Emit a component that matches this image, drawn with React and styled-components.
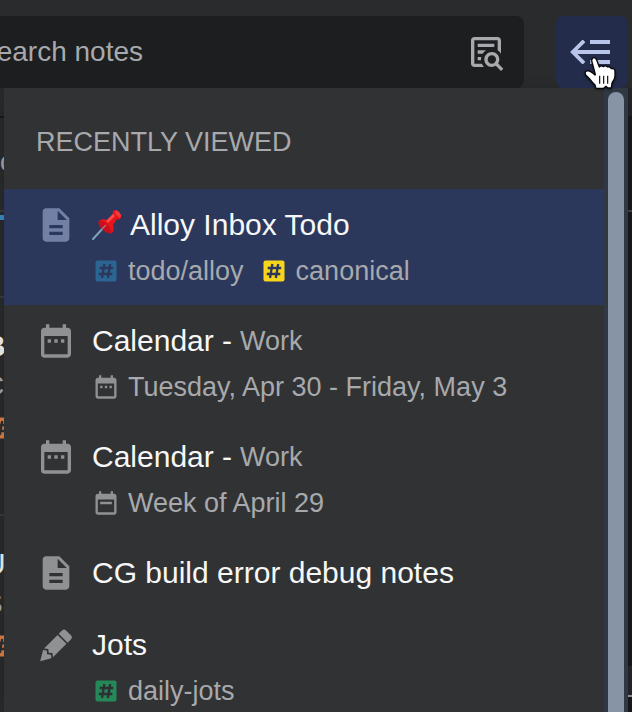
import styled, { createGlobalStyle, css } from 'styled-components';
import { MdDateRange, MdDescription } from 'react-icons/md';

const GlobalStyle = createGlobalStyle`
  * {
    box-sizing: border-box;
  }
  body {
    margin: 0;
    overflow: hidden;
    background: #2a2b2d;
    font-family: "Liberation Sans", Arial, sans-serif;
  }
`;

const Shell = styled.div`
  height: 100vh;
  margin-left: -24px;
  display: flex;
  flex-direction: column;
`;

const TopBar = styled.header`
  position: relative;
  z-index: 2;
  display: flex;
  gap: 32px;
  padding: 16px 4px 0 0;
`;

const SearchBox = styled.label`
  flex: 1;
  height: 72px;
  display: flex;
  align-items: center;
  padding-right: 18px;
  background: #1d1e20;
  border-radius: 8px;
`;

const SearchInput = styled.input`
  flex: 1;
  min-width: 0;
  height: 40px;
  padding: 0 2px;
  border: none;
  outline: none;
  background: transparent;
  font-family: inherit;
  font-size: 28px;
  color: #f4f4f4;

  &::placeholder {
    color: #a7a9ac;
    opacity: 1;
  }
`;

const CollapseButton = styled.button`
  position: relative;
  width: 72px;
  height: 72px;
  display: flex;
  align-items: center;
  justify-content: center;
  padding: 0;
  border: none;
  border-radius: 8px;
  background: #232c4b;
  color: #b9c5ea;
  cursor: pointer;
`;

const Pointer = styled.svg`
  position: absolute;
  left: 24px;
  top: 34px;
  width: 40px;
  height: 44px;
  filter: drop-shadow(0 1px 1px rgba(0, 0, 0, 0.5));
`;

const Body = styled.main`
  position: relative;
  flex: 1;
  min-height: 0;
  display: flex;
`;

const NoteList = styled.section`
  width: 320px;
  overflow: hidden;
  background: #2a2b2d;
`;

const ListBar = styled.div`
  height: ${({ $tall }) => ($tall ? '94px' : '30px')};
  padding: ${({ $tall }) => ($tall ? '26px 8px 0 24px' : '0')};
  border-bottom: 2px solid ${({ $tall }) => ($tall ? '#3b3c3e' : '#18191a')};
  font-size: 27px;
  line-height: 36px;
  color: #a7a9ac;
`;

const ActiveTab = styled.div`
  width: 28px;
  height: 8px;
  margin: 0 0 76px;
  border-bottom: 5px solid #3b8ac4;
`;

const NoteCard = styled.article`
  height: 218px;
  padding: 28px 8px 0;
  border-top: 2px solid #3b3c3e;
`;

const CardTitle = styled.div`
  font-size: 30px;
  line-height: 40px;
  font-weight: ${({ $bold }) => ($bold ? 700 : 400)};
  color: #f4f4f4;
`;

const CardText = styled.div`
  margin-bottom: 8px;
  font-size: 28px;
  line-height: 40px;
  color: #a7a9ac;
`;

const Editor = styled.section`
  flex: 1;
  display: flex;
  flex-direction: column;
  background: #191a1b;
`;

const EditorBar = styled.div`
  height: ${({ $height }) => $height}px;
  flex: none;
  background: ${({ $tone }) => $tone || 'transparent'};
  border-bottom: 2px solid ${({ $line }) => $line};
`;

const EditorText = styled.div`
  flex: 1;
`;

const Menu = styled.section`
  position: absolute;
  top: 0;
  bottom: 0;
  left: 28px;
  right: 4px;
  display: flex;
  overflow: hidden;
  background: #313234;
  box-shadow: 0 4px 16px rgba(0, 0, 0, 0.2);
`;

const MenuContent = styled.div`
  flex: 1;
  min-width: 0;
`;

const MenuHeading = styled.h2`
  margin: 0;
  padding: 36px 32px 29px;
  font-size: 27px;
  font-weight: 400;
  line-height: 36px;
  color: #a7a9ac;
`;

const Items = styled.ul`
  margin: 0;
  padding: 0;
  list-style: none;
`;

const Item = styled.button`
  width: 100%;
  display: flex;
  align-items: flex-start;
  gap: 16px;
  padding: 16px 32px;
  border: none;
  background: transparent;
  color: #909193;
  font-family: inherit;
  text-align: left;
  cursor: pointer;

  ${({ $selected }) =>
    $selected &&
    css`
      background: #2b385c;
      color: #7280a6;
    `}
`;

const ItemText = styled.span`
  flex: 1;
  display: flex;
  flex-direction: column;
  gap: 8px;
`;

const Title = styled.span`
  display: flex;
  align-items: center;
  gap: 8px;
  font-size: 30px;
  line-height: 40px;
  white-space: nowrap;
  color: #f7f7f7;
`;

const Account = styled.span`
  font-size: 27px;
  color: #a7a9ac;
`;

const Details = styled.span`
  display: flex;
  gap: 16px;
`;

const Detail = styled.span`
  display: flex;
  align-items: center;
  gap: 8px;
  font-size: 27px;
  line-height: 36px;
  white-space: nowrap;
  color: #a7a9ac;
`;

const DetailIcon = styled.span`
  display: flex;
  color: #909193;
`;

const Track = styled.div`
  width: 24px;
  flex: none;
  padding: 4px 4px 0;
  background: #303843;
`;

const Thumb = styled.div`
  height: 100%;
  border-radius: 8px 8px 0 0;
  background: #8694a5;
`;

const HashIcon = ({ color, ink = '#2d2f33' }) => (
  <svg width="28" height="28" viewBox="0 0 24 24" fill="none">
    <rect x="3" y="3" width="18" height="18" rx="1.8" fill={color} />
    <path
      d="M10.6 6 8.6 18M15.6 6 13.6 18M6.6 9.4H18.2M5.8 14.6H17.4"
      stroke={ink}
      strokeWidth="2"
    />
  </svg>
);

const PencilIcon = () => (
  <svg width="40" height="40" viewBox="0 0 24 24" fill="currentColor">
    <path d="M16.84 2.73c-.39 0-.77.15-1.07.44l-2.12 2.12 5.3 5.31 2.12-2.1c.6-.61.6-1.56 0-2.14L17.9 3.17c-.3-.29-.68-.44-1.06-.44M12.94 6l-8.1 8.11 2.56.28.18 2.29 2.28.17.29 2.56 8.1-8.11M4.25 15.04 2.5 21.73l6.7-1.79-.24-2.16-2.31-.17-.18-2.32" />
  </svg>
);

const WeekIcon = () => (
  <svg width="28" height="28" viewBox="0 0 24 24" fill="currentColor">
    <path d="M19 4h-1V2h-2v2H8V2H6v2H5c-1.1 0-2 .9-2 2v14c0 1.1.9 2 2 2h14c1.1 0 2-.9 2-2V6c0-1.1-.9-2-2-2zm0 16H5V9h14v11zM7 11h10v2H7z" />
  </svg>
);

const NoteSearchIcon = () => (
  <svg width="40" height="40" viewBox="0 0 24 24" fill="#a7a9ac">
    <path d="M15.5 12c2.5 0 4.5 2 4.5 4.5 0 .88-.25 1.71-.69 2.4L22.39 22 21 23.39l-3.12-3.07c-.69.43-1.51.68-2.38.68-2.5 0-4.5-2-4.5-4.5s2-4.5 4.5-4.5m0 2a2.5 2.5 0 0 0 0 5 2.5 2.5 0 0 0 0-5M5 3h14c1.11 0 2 .89 2 2v8.03c-.5-.8-1.19-1.49-2-2.03V5H5v14h4.5c.31.75.76 1.42 1.31 2H5c-1.11 0-2-.89-2-2V5c0-1.11.89-2 2-2m2 4h10v2H7V7m0 4h5.03c-.8.5-1.49 1.19-2.03 2H7v-2m0 4h2.17c-.11.5-.17 1-.17 1.5v.5H7v-2z" />
  </svg>
);

const CollapseIcon = () => (
  <svg width="44" height="24" viewBox="0 0 44 24">
    <path d="M20 0h20v4H20zM5 10h35v4H5zM20 20h20v4H20z" fill="currentColor" />
    <path d="M14 .8 2.8 12 14 23.2" fill="none" stroke="currentColor" strokeWidth="3.8" />
  </svg>
);

const PushpinIcon = () => (
  <svg width="30" height="32" viewBox="0 0 30 32">
    <path d="M1 30 13 17" stroke="#7fa3b8" strokeWidth="2" strokeLinecap="round" />
    <path
      d="M7 12c2-2 6-2 8-1l6-6c-1-2 0-4 2-4 3 0 6 4 6 7 0 2-2 3-4 2l-4 6c1 3 1 6-1 8-3 1-7-1-10-4-3-3-4-6-3-8z"
      fill="#e8141b"
    />
    <path d="M7 12c5-1 11 5 13 12-3 1-7-1-10-4-3-3-4-6-3-8z" fill="#c80f1b" />
    <path d="m14 12 7-7 2 2-7 7z" fill="#ff4a4a" />
    <ellipse cx="26" cy="5" rx="2" ry="4" transform="rotate(-40 26 5)" fill="#f7373a" />
    <path d="m9 21 5-5" stroke="#b0707c" strokeWidth="1.4" />
  </svg>
);

const HandPointer = () => (
  <Pointer viewBox="0 0 120 132" aria-hidden="true">
    <path
      d="M35 32Q36 23 42 23 47 23 50 30L58 51Q63 45 70 50 76 45 83 51 90 48 94 56 105 54 105 65V78Q104 89 96 99L94 114H83L78 109 71 115H48L45 105Q37 97 30 88L17 75Q12 64 23 62 32 63 45 75L46 73Z"
      fill="#fff"
      stroke="#080808"
      strokeWidth="4"
      strokeLinejoin="round"
    />
    <path d="M59 77V101M71 77V101M83 77V101" stroke="#111" strokeWidth="3.6" />
  </Pointer>
);

const recent = [
  {
    title: 'Alloy Inbox Todo',
    icon: <MdDescription size={40} />,
    pinned: true,
    selected: true,
    details: [
      { text: 'todo/alloy', icon: <HashIcon color="#2b6592" ink="#2b385c" /> },
      { text: 'canonical', icon: <HashIcon color="#f8d51d" ink="#2b385c" /> },
    ],
  },
  {
    title: 'Calendar -',
    account: 'Work',
    icon: <MdDateRange size={40} />,
    details: [{ text: 'Tuesday, Apr 30 - Friday, May 3', icon: <MdDateRange size={28} /> }],
  },
  {
    title: 'Calendar -',
    account: 'Work',
    icon: <MdDateRange size={40} />,
    details: [{ text: 'Week of April 29', icon: <WeekIcon /> }],
  },
  {
    title: 'CG build error debug notes',
    icon: <MdDescription size={40} />,
  },
  {
    title: 'Jots',
    icon: <PencilIcon />,
    details: [{ text: 'daily-jots', icon: <HashIcon color="#268758" /> }],
  },
];

function RecentItem({ item }) {
  return (
    <li>
      <Item type="button" $selected={item.selected}>
        {item.icon}
        <ItemText>
          <Title>
            {item.pinned && <PushpinIcon />}
            {item.title}
            {item.account && <Account>{item.account}</Account>}
          </Title>
          {item.details && (
            <Details>
              {item.details.map((detail) => (
                <Detail key={detail.text}>
                  <DetailIcon>{detail.icon}</DetailIcon>
                  {detail.text}
                </Detail>
              ))}
            </Details>
          )}
        </ItemText>
      </Item>
    </li>
  );
}

export default function App() {
  return (
    <>
      <GlobalStyle />
      <Shell>
        <TopBar>
          <SearchBox>
            <SearchInput type="text" placeholder="Search notes" />
            <NoteSearchIcon />
          </SearchBox>
          <CollapseButton type="button">
            <CollapseIcon />
            <HandPointer />
          </CollapseButton>
        </TopBar>
        <Body>
          <NoteList>
            <ListBar />
            <ListBar $tall>c</ListBar>
            <ActiveTab />
            <NoteCard>
              <CardTitle $bold>B</CardTitle>
              <CardText>C</CardText>
              <HashIcon color="#dc7f45" />
            </NoteCard>
            <NoteCard>
              <CardTitle>U</CardTitle>
              <CardText>S</CardText>
              <HashIcon color="#dc7f45" />
            </NoteCard>
          </NoteList>
          <Editor>
            <EditorBar $height={30} $tone="#242526" $line="#18191a" />
            <EditorBar $height={94} $line="#434547" />
            <EditorText />
            <EditorBar $height={31} $tone="#262728" $line="#9a9b9c" />
            <EditorBar $height={15} $line="#191a1b" />
          </Editor>
          <Menu>
            <MenuContent>
              <MenuHeading>RECENTLY VIEWED</MenuHeading>
              <Items>
                {recent.map((item, index) => (
                  <RecentItem key={index} item={item} />
                ))}
              </Items>
            </MenuContent>
            <Track>
              <Thumb />
            </Track>
          </Menu>
        </Body>
      </Shell>
    </>
  );
}
